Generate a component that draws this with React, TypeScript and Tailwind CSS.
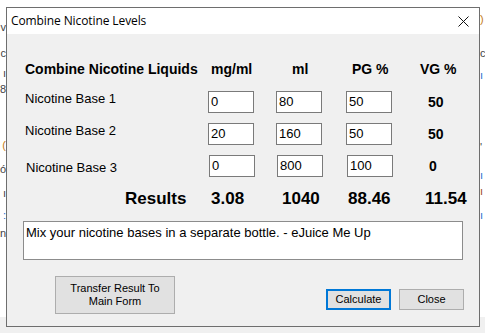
import React from 'react';

const rows = [
  { label: 'Nicotine Base 1', mg: '0', ml: '80', pg: '50', vg: '50', shift: false },
  { label: 'Nicotine Base 2', mg: '20', ml: '160', pg: '50', vg: '50', shift: false },
  { label: 'Nicotine Base 3', mg: '0', ml: '800', pg: '100', vg: '0', shift: true },
];

// bits of the window behind the dialog
const leftBits = [
  { t: 'v', c: 'text-[#444]', top: 'mt-[20px]' },
  { t: 'c', c: 'text-[#444]', top: 'mt-[12px]' },
  { t: 'ı', c: 'text-[#444]', top: 'mt-[6px]' },
  { t: '8', c: 'text-[#444]', top: 'mt-[2px]' },
  { t: '(', c: 'text-[#c47a1a]', top: 'mt-[42px]' },
  { t: 'ó', c: 'text-[#444]', top: 'mt-[10px]' },
  { t: 'ı', c: 'text-[#444]', top: 'mt-[10px]' },
  { t: ':', c: 'text-[#1e6fd0]', top: 'mt-[8px]' },
  { t: 'n', c: 'text-[#444]', top: 'mt-[4px]' },
];

const rightBits = [
  { t: ')', c: 'text-[#c47a1a]', top: 'mt-[12px]' },
  { t: 'c', c: 'text-[#444]', top: 'mt-[20px]' },
  { t: 'ı', c: 'text-[#1e6fd0]', top: 'mt-[8px]' },
  { t: "'", c: 'text-[#444]', top: 'mt-[58px]' },
  { t: 'ı', c: 'text-[#1e6fd0]', top: 'mt-[14px]' },
  { t: 'ı', c: 'text-[#9a4a1a]', top: 'mt-[2px]' },
  { t: 'ı', c: 'text-[#1e6fd0]', top: 'mt-[10px]' },
];

function Field({ value }: { value: string }) {
  return (
    <div className="w-[46px] h-[22px] bg-white border border-[#7a7a7a] pl-[2px] flex items-center text-[13px] text-black">
      {value}
    </div>
  );
}

export default function App() {
  return (
    <div className="relative w-[485px] h-[333px] overflow-hidden bg-white font-['Liberation_Sans',Arial,sans-serif]">
      {/* Background window */}
      <div className="flex flex-col h-full">
        <div className="flex justify-between h-[317px] bg-white">
          <div className="w-[6px] flex flex-col items-end text-[11px] leading-[14px]">
            {leftBits.map((b, i) => (
              <span key={i} className={`h-[14px] ${b.c} ${b.top}`}>{b.t}</span>
            ))}
          </div>
          <div className="w-[5px] flex flex-col items-start text-[11px] leading-[14px]">
            {rightBits.map((b, i) => (
              <span key={i} className={`h-[14px] ${b.c} ${b.top}`}>{b.t}</span>
            ))}
          </div>
        </div>
        <div className="flex-1 bg-[#f0f0f0]" />
      </div>

      {/* Dialog */}
      <div className="absolute left-[6px] top-[7px] w-[474px] h-[320px] border border-[#6e6e6e] flex flex-col bg-[#f0f0f0]">
        <div className="h-[26px] bg-white flex items-center justify-between pl-[4px] pr-[10px]">
          <span className="text-[12px] text-black font-['Open_Sans','Noto_Sans',sans-serif] tracking-[-0.1px]">Combine Nicotine Levels</span>
          <svg width="11" height="11" viewBox="0 0 11 11" className="mt-[1px]">
            <path d="M0.5 0.5 L10.5 10.5 M10.5 0.5 L0.5 10.5" stroke="#111" strokeWidth="1" />
          </svg>
        </div>

        <div className="flex-1 flex flex-col pl-[18px] text-black">
          {/* header */}
          <div className="flex items-center h-[20px] mt-[25px] text-[14px] font-bold">
            <div className="w-[183px]">Combine Nicotine Liquids</div>
            <div className="w-[68px] pl-[3px]">mg/ml</div>
            <div className="w-[70px] pl-[16px]">ml</div>
            <div className="w-[74px] pl-[6px]">PG %</div>
            <div>VG %</div>
          </div>

          {/* rows */}
          <div className="flex flex-col gap-[10px] mt-[12px]">
            {rows.map(r => (
              <div key={r.label} className={`flex items-center h-[22px] ${r.shift ? 'pl-[1px]' : ''}`}>
                <div className={`w-[183px] text-[13px] ${r.shift ? 'mt-[3px]' : '-mt-[6px]'}`}>{r.label}</div>
                <div className="w-[68px]"><Field value={r.mg} /></div>
                <div className="w-[70px]"><Field value={r.ml} /></div>
                <div className="w-[74px]"><Field value={r.pg} /></div>
                <div className="pl-[8px] text-[14px] font-bold">{r.vg}</div>
              </div>
            ))}
          </div>

          {/* results */}
          <div className="flex items-center h-[22px] mt-[11px] text-[17px] font-bold">
            <div className="w-[183px] pl-[100px]">Results</div>
            <div className="w-[68px] pl-[3px]">3.08</div>
            <div className="w-[70px] pl-[6px]">1040</div>
            <div className="w-[74px] pl-[2px]">88.46</div>
            <div className="pl-[5px]">11.54</div>
          </div>

          {/* note */}
          <div className="ml-[-2px] mt-[11px] w-[440px] h-[39px] bg-white border border-[#8c8c8c] pl-[2px] pt-[3px] text-[13px] leading-[16px]">
            Mix your nicotine bases in a separate bottle. - eJuice Me Up
          </div>

          {/* buttons */}
          <div className="flex items-start mt-[16px] text-[11px] leading-[13px]">
            <button className="ml-[30px] w-[120px] h-[38px] bg-[#e1e1e1] border border-[#adadad] flex flex-col items-center justify-center">
              <span>Transfer Result To</span>
              <span>Main Form</span>
            </button>
            <button className="ml-[151px] mt-[13px] w-[65px] h-[21px] bg-[#e1e1e1] border-2 border-[#0078d7] flex items-center justify-center">
              Calculate
            </button>
            <button className="ml-[8px] mt-[13px] w-[65px] h-[21px] bg-[#e1e1e1] border border-[#adadad] flex items-center justify-center">
              Close
            </button>
          </div>
        </div>
      </div>
    </div>
  );
}
